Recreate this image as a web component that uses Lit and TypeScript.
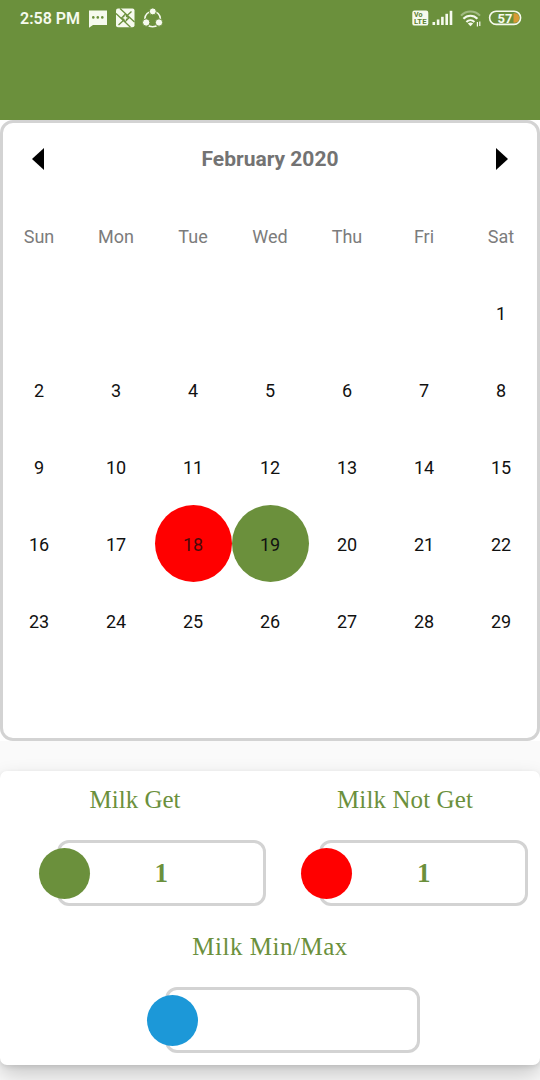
import { LitElement, html, css, nothing } from "lit";
import { customElement, property } from "lit/decorators.js";

@customElement("status-bar")
class StatusBar extends LitElement {
  static styles = css`
    :host { display: flex; justify-content: space-between; box-sizing: border-box; height: 36px; padding: 0 18px 0 20px; color: #f6faee; }
    .group { display: flex; align-items: center; height: 36px; }
    .time { font: 600 16px/38px Roboto, sans-serif; width: 68px; padding-top: 1px; white-space: nowrap; }
    svg { display: block; flex: none; }
    .label { font-family: Roboto, sans-serif; font-weight: 700; }
  `;
  render() {
    return html`
      <div class="group">
        <div class="time">2:58 PM</div>
        <svg width="80" height="36" viewBox="88 0 80 36">
          <path d="M89 10.5H107v14.5H93L89 27.8Z" fill="#f6faee" />
          <g fill="#6b903c"><circle cx="93.3" cy="17.4" r="1.3" /><circle cx="97.8" cy="17.4" r="1.3" /><circle cx="102.3" cy="17.4" r="1.3" /></g>
          <rect x="116" y="8.5" width="18.5" height="18.8" rx="2" fill="#f6faee" />
          <g fill="none" stroke="#6b903c" stroke-width="1.3">
            <path d="M120 8.5L134.5 22M116 13.5L130.5 27.3M131.5 11.5L125.5 17M125 19L118.5 25" />
          </g>
          <path d="M125.2 13.2l4.5 4.7-4.5 4.7-4.5-4.7Z" fill="#6b903c" />
          <path d="M125.2 14.6l.9 2.4 2 .9-2 .9-.9 2.4-.9-2.4-2-.9 2-.9Z" fill="#f6faee" />
          <circle cx="152.6" cy="19" r="7.8" fill="none" stroke="#f6faee" stroke-width="1.6" />
          <g fill="#f6faee" stroke="#6b903c" stroke-width="1">
            <circle cx="152.8" cy="11.4" r="3.5" /><circle cx="146.2" cy="22.5" r="3.7" /><circle cx="159" cy="22.5" r="3.7" />
          </g>
        </svg>
      </div>
      <div class="group">
        <svg width="110" height="36" viewBox="412 0 110 36">
          <rect x="412.3" y="10.6" width="16" height="15" rx="2.2" fill="#f6faee" />
          <g class="label" fill="#5c7f31" font-size="6.8"><text x="414" y="17.3" textLength="8.5" lengthAdjust="spacingAndGlyphs">Vo</text><text x="414" y="24.4" textLength="12.5" lengthAdjust="spacingAndGlyphs">LTE</text></g>
          <g fill="#f6faee">
            <rect x="432.5" y="22" width="2.6" height="3" /><rect x="436.8" y="19.5" width="2.6" height="5.5" /><rect x="441.1" y="16.8" width="2.6" height="8.2" /><rect x="445.4" y="13.8" width="2.6" height="11.2" /><rect x="449.7" y="10.8" width="2.6" height="14.2" />
          </g>
          <g fill="none" stroke="#f6faee" stroke-width="2.1">
            <path d="M461 15.6a13 13 0 0 1 19 0" opacity=".4" />
            <path d="M463.4 18.8a9.6 9.6 0 0 1 14 0" />
            <path d="M466.4 21.9a5.8 5.8 0 0 1 8 0" />
          </g>
          <path d="M467.8 23.6q2.7-2 5.4 0L470.5 26.2Z" fill="#f6faee" />
          <path d="M477.4 22v4.5M479.8 21.5v4.5" stroke="#f6faee" stroke-width="1.2" />
          <path d="M513.5 13.2h1a4.8 4.8 0 0 1 0 9.6h-1Z" fill="#d99a35" />
          <rect x="489.6" y="11.2" width="31" height="13.2" rx="6.6" fill="none" stroke="#f6faee" stroke-width="1.6" />
          <text class="label" x="497.5" y="22.5" font-size="13" fill="#f6faee" textLength="15">57</text>
        </svg>
      </div>`;
  }
}

@customElement("month-calendar")
class MonthCalendar extends LitElement {
  static styles = css`
    :host { display: block; box-sizing: border-box; height: 621px; border: 3px solid #d3d3d3; border-radius: 13px; background: #fff; font-family: Roboto, sans-serif; }
    .head { display: flex; align-items: center; justify-content: space-between; height: 72px; padding: 0 29px; }
    .title { font-size: 21px; font-weight: 700; color: #737373; }
    svg { display: block; }
    .grid { display: grid; grid-template-columns: repeat(7, 77px); grid-auto-rows: 77px; justify-content: center; padding-top: 2px; margin: 0 -3px; }
    .cell { display: grid; place-items: center; box-sizing: border-box; padding-top: 2px; font-size: 18px; line-height: 21px; color: #111; border-radius: 50%; }
    .name { color: #7c7c7c; }
    .missed { background: #ff0000; color: #4a0909; }
    .got { background: #6b903c; }
  `;
  render() {
    const names = ["Sun", "Mon", "Tue", "Wed", "Thu", "Fri", "Sat"];
    const cells = [...Array(6).fill(null), ...Array.from({ length: 29 }, (_, i) => i + 1)];
    return html`
      <div class="head">
        <svg width="12" height="22" viewBox="0 0 12 22"><path d="M12 0v22L0 11Z" /></svg>
        <div class="title">February 2020</div>
        <svg width="12" height="22" viewBox="0 0 12 22"><path d="M0 0v22L12 11Z" /></svg>
      </div>
      <div class="grid">
        ${names.map((n) => html`<div class="cell name">${n}</div>`)}
        ${cells.map((d) => html`<div class="cell ${d === 18 ? "missed" : d === 19 ? "got" : ""}">${d ?? nothing}</div>`)}
      </div>`;
  }
}

@customElement("count-field")
class CountField extends LitElement {
  @property() label = "";
  @property() value = "";
  @property() tone = "get";
  static styles = css`
    :host { display: block; height: 147px; color: #6b903c; font-family: "Liberation Serif", serif; }
    .label { height: 58px; line-height: 58px; font-size: 25px; white-space: nowrap; text-align: center; }
    .label.range { letter-spacing: 0.52px; }
    .label.miss { letter-spacing: 0.1px; }
    .row { position: relative; margin-top: 11px; padding-left: 18px; }
    .row.get { margin-left: 39px; margin-right: 4.5px; }
    .row.miss { margin-left: 31.4px; margin-right: 12px; }
    .row.range { margin-left: 147px; margin-right: 120px; }
    .box { box-sizing: border-box; height: 66px; border: 3px solid #d3d3d3; border-radius: 12px; text-align: center; font-size: 27px; font-weight: 700; line-height: 61px; }
    .dot { position: absolute; left: 0; top: 7.5px; width: 51px; height: 51px; border-radius: 50%; background: #6b903c; }
    .dot.miss { background: #ff0000; }
    .dot.range { background: #1c98d8; }
  `;
  render() {
    return html`
      <div class="label ${this.tone}">${this.label}</div>
      <div class="row ${this.tone}"><div class="box">${this.value}</div><div class="dot ${this.tone}"></div></div>`;
  }
}

@customElement("app-root")
class AppRoot extends LitElement {
  static styles = css`
    :host { display: flex; flex-direction: column; height: 1080px; overflow: hidden; background: #fafafa; }
    .top { height: 120px; background: #6b903c; }
    .calendar-wrap { background: #fff; height: 621px; }
    .summary { margin-top: 30px; height: 294px; border-radius: 7px; background: #fff; box-shadow: 0 10px 22px rgba(0, 0, 0, 0.2), 0 2px 5px rgba(0, 0, 0, 0.1); }
    .pair { display: grid; grid-template-columns: 270px 270px; }
  `;
  render() {
    return html`
      <div class="top"><status-bar></status-bar></div>
      <div class="calendar-wrap"><month-calendar></month-calendar></div>
      <div class="summary">
        <div class="pair">
          <count-field label="Milk Get" value="1" tone="get"></count-field>
          <count-field label="Milk Not Get" value="1" tone="miss"></count-field>
        </div>
        <count-field label="Milk Min/Max" tone="range"></count-field>
      </div>`;
  }
}
